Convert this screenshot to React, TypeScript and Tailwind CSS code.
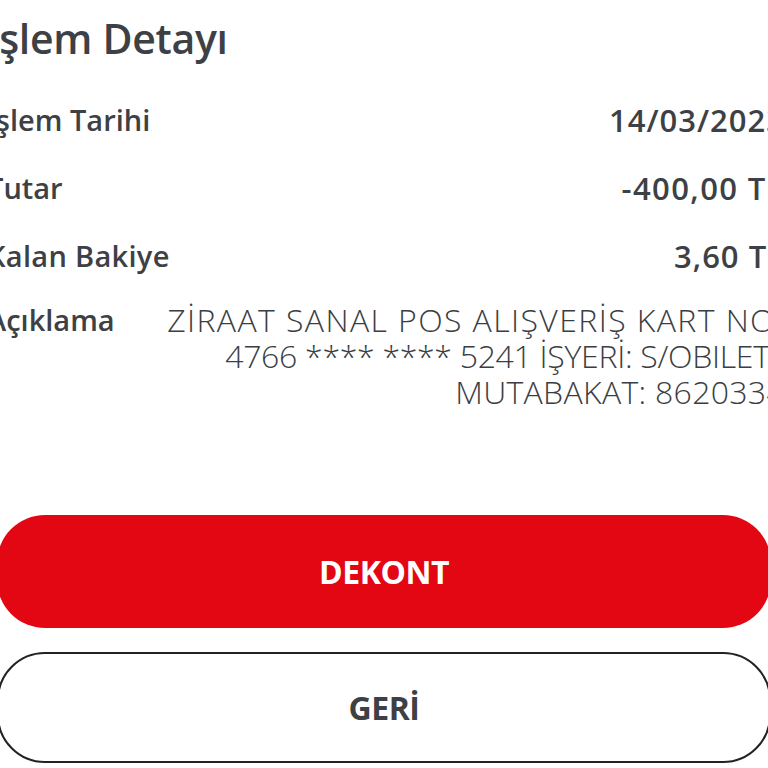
import React from "react";

export default function App() {
  const font = { fontFamily: '"Open Sans", "Liberation Sans", sans-serif' };
  return (
    <div className="w-[768px] h-[768px] overflow-hidden bg-white" style={font}>
      <div className="ml-[-13px] w-[798px] text-[#3d4145]">
        <div className="pt-[12px] h-[86px] text-[41px] font-semibold leading-[52px] tracking-[-0.3px]">İşlem Detayı</div>
        <div className="flex flex-col">
          <div className="flex justify-between items-center h-[68px] text-[29px] font-semibold">
            <span>İşlem Tarihi</span>
            <span className="text-[31px] tracking-[1px]">14/03/2023</span>
          </div>
          <div className="flex justify-between items-center h-[68px] text-[29px] font-semibold">
            <span>Tutar</span>
            <span className="text-[31px] tracking-[1.4px]">-400,00 TL</span>
          </div>
          <div className="flex justify-between items-center h-[68px] text-[29px] font-semibold">
            <span className="tracking-[0.3px]">Kalan Bakiye</span>
            <span className="text-[31px] tracking-[1px]">3,60 TL</span>
          </div>
          <div className="flex justify-between items-start pt-[12px]">
            <span className="text-[29px] font-semibold leading-[36px] whitespace-nowrap">Açıklama</span>
            <div className="text-right text-[32px] font-light leading-[36px] whitespace-nowrap text-[#3a3e42]">
              <div className="tracking-[1.4px]">ZİRAAT SANAL POS ALIŞVERİŞ KART NO:</div>
              <div className="tracking-[-0.3px]">4766 **** **** 5241 İŞYERİ: S/OBILET .</div>
              <div className="tracking-[0.3px]">MUTABAKAT: 8620334</div>
            </div>
          </div>
        </div>
      </div>
      <div className="mt-[105px] ml-[-3px] w-[774px] flex flex-col gap-[24px]">
        <button className="h-[113px] w-full rounded-[48px] bg-[#e30613] text-white text-[32px] font-bold tracking-[-0.5px]">DEKONT</button>
        <button className="h-[111px] w-full rounded-[48px] border-2 border-[#222] bg-white text-[#3d4145] text-[32px] font-bold tracking-[-0.5px]">GERİ</button>
      </div>
    </div>
  );
}
